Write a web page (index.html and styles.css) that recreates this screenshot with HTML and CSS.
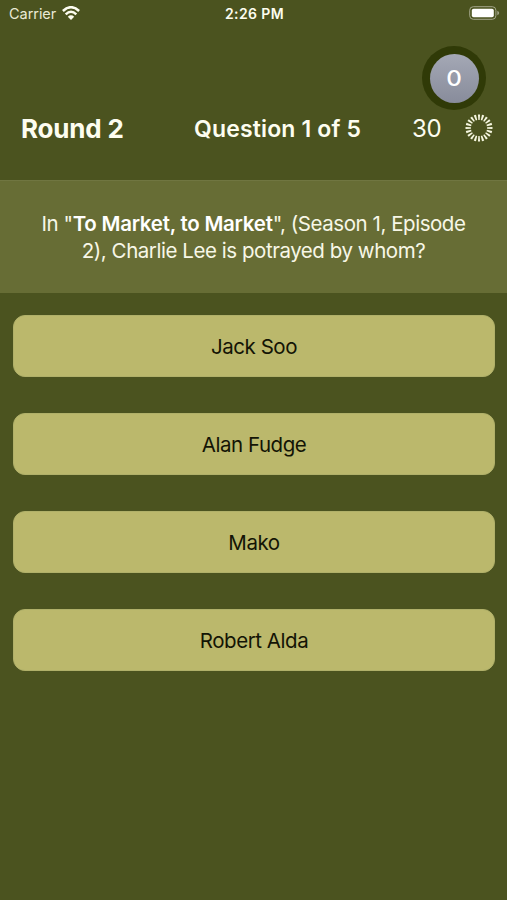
FILE: index.html
```html
<!DOCTYPE html>
<html lang="en">
<head>
<meta charset="utf-8">
<title>Quiz</title>
<link rel="stylesheet" href="styles.css">
</head>
<body>
<div class="status">
  <div class="carrier"><span>Carrier</span>
    <svg width="18" height="14" viewBox="0 0 18 14" fill="none" stroke="#fdfdf0" stroke-width="2.5"><path d="M.9 5Q9-2.6 17.1 5M3.7 8.3Q9 3.2 14.3 8.3"/><path d="M9 13.9L5.8 10.7Q9 7.8 12.2 10.7Z" fill="#fdfdf0" stroke="none"/></svg>
  </div>
  <div class="time">2:26 PM</div>
  <svg class="battery" width="31" height="14" viewBox="0 0 31 14"><rect x=".7" y=".7" width="26.2" height="12.6" rx="3.6" fill="none" stroke="#a3a68a"/><rect x="2.8" y="2.7" width="22" height="8.6" rx="1.8" fill="#fff"/><path d="M28.3 4.7Q30.2 5.5 30.2 7T28.3 9.3Z" fill="#a3a68a"/></svg>
</div>
<div class="score-row"><div class="score"><span><i>0</i></span></div></div>
<header class="heading">
  <div class="round">Round 2</div>
  <div class="count">Question 1 of 5</div>
  <div class="seconds">30</div>
  <svg class="timer" width="28" height="28" viewBox="0 0 28 28"><circle cx="14" cy="14" r="10.8" fill="none" stroke="#f5f6df" stroke-width="5.4" pathLength="200" stroke-dasharray="5.4 4.6" stroke-dashoffset="2.7"/></svg>
</header>
<section class="question">
  <div class="line">In "<b>To Market, to Market</b>", (Season 1, Episode</div>
  <div class="line">2), Charlie Lee is potrayed by whom?</div>
</section>
<main class="answers">
  <button>Jack Soo</button>
  <button>Alan Fudge</button>
  <button>Mako</button>
  <button>Robert Alda</button>
</main>
</body>
</html>
```
FILE: styles.css
```css
* { box-sizing: border-box; }
body {
  margin: 0;
  height: 900px;
  overflow: hidden;
  background: #4b531f;
  color: #fdfdf0;
  font-family: Inter, "Liberation Sans", sans-serif;
}
.status {
  display: grid;
  grid-template-columns: 1fr auto 1fr;
  align-items: center;
  height: 28px;
  padding: 0 7px 2px 9px;
  font-size: 14.5px;
}
.carrier { display: flex; align-items: center; gap: 6px; color: #e9ead5; letter-spacing: -.05px; }
.time { font-size: 14px; font-weight: 600; letter-spacing: .4px; }
.battery { justify-self: end; }
.score-row { display: flex; justify-content: flex-end; padding: 18px 21px 0 0; }
.score {
  width: 64px;
  height: 64px;
  padding: 7.5px;
  border-radius: 50%;
  background: #303a07;
}
.score span {
  display: flex;
  align-items: center;
  justify-content: center;
  height: 49px;
  border-radius: 50%;
  background: linear-gradient(#a4a8b5, #888c9b);
  color: #fff;
  font-size: 22px;
  font-weight: 500;
}
.score i { font-style: normal; transform: scaleX(1.1); }
.heading {
  display: grid;
  grid-template-columns: 173px 218px 53px 28px;
  align-items: center;
  height: 71px;
  margin-top: -1px;
  padding: 0 0 32px 21px;
  white-space: nowrap;
}
.round { font-size: 26px; font-weight: 700; letter-spacing: -.2px; }
.count { font-size: 23px; font-weight: 600; letter-spacing: .15px; }
.seconds { font-size: 24px; letter-spacing: -.3px; }
.timer { margin-top: -1px; }
.question {
  height: 113px;
  padding-top: 29px;
  background: #676d35;
  border-top: 1px solid #707641;
  color: #f7f7e7;
  font-size: 20.5px;
  line-height: 27px;
  text-align: center;
  white-space: nowrap;
  letter-spacing: -.45px;
}
.question b { color: #fff; font-weight: 600; letter-spacing: -.25px; }
.answers { display: flex; flex-direction: column; gap: 36px; padding: 22px 12px 0 13px; }
.answers button {
  height: 62px;
  padding: 0;
  border: 1px solid #b0b069;
  border-radius: 12px;
  background: #bbb86c;
  color: #131405;
  font: 400 20.5px Inter, "Liberation Sans", sans-serif;
  letter-spacing: -.45px;
}
```
